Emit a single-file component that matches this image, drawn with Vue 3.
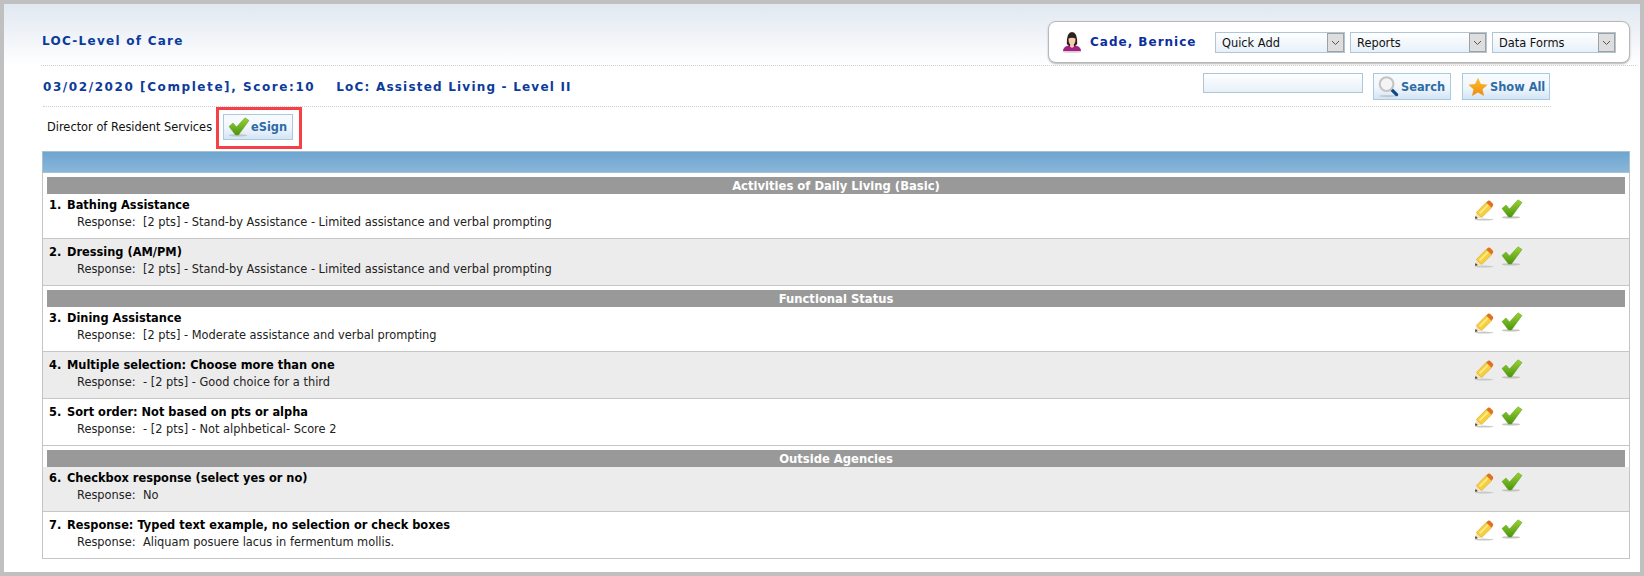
<script setup>
const sections = [
  { title: 'Activities of Daily Living (Basic)', rows: [
    { n: 1, q: 'Bathing Assistance', a: '[2 pts] - Stand-by Assistance - Limited assistance and verbal prompting' },
    { n: 2, q: 'Dressing (AM/PM)', a: '[2 pts] - Stand-by Assistance - Limited assistance and verbal prompting' },
  ]},
  { title: 'Functional Status', rows: [
    { n: 3, q: 'Dining Assistance', a: '[2 pts] - Moderate assistance and verbal prompting' },
    { n: 4, q: 'Multiple selection: Choose more than one', a: '- [2 pts] - Good choice for a third' },
    { n: 5, q: 'Sort order: Not based on pts or alpha', a: '- [2 pts] - Not alphbetical- Score 2' },
  ]},
  { title: 'Outside Agencies', rows: [
    { n: 6, q: 'Checkbox response (select yes or no)', a: 'No' },
    { n: 7, q: 'Response: Typed text example, no selection or check boxes', a: 'Aliquam posuere lacus in fermentum mollis.' },
  ]},
]
const selects = [
  { label: 'Quick Add', w: 130 },
  { label: 'Reports', w: 137 },
  { label: 'Data Forms', w: 124 },
]
</script>

<template>
  <svg class="defs" width="0" height="0" aria-hidden="true">
    <defs>
      <linearGradient id="gGreen" x1="0" y1="0" x2="0" y2="1">
        <stop offset="0" stop-color="#9ad334" />
        <stop offset="1" stop-color="#4a9410" />
      </linearGradient>
      <linearGradient id="gStar" x1="0" y1="0" x2="0" y2="1">
        <stop offset="0" stop-color="#fcc02c" />
        <stop offset="1" stop-color="#ef8a10" />
      </linearGradient>
      <symbol id="check" viewBox="0 0 22 20">
        <ellipse cx="10" cy="18.4" rx="9" ry="1.1" fill="#c4c4c4" />
        <path d="M1 9.5 L5 6 L8.5 10 L17 0.8 L21 3.5 L10.5 18 L7.5 18 Z" fill="url(#gGreen)" stroke="#5b9f1a" stroke-width=".5" />
      </symbol>
      <symbol id="pencil" viewBox="0 0 20 21">
        <ellipse cx="10" cy="19.6" rx="9.5" ry="1" fill="#c8c8c8" />
        <path d="M1 18.8 L2.4 12.4 L7.6 17.6 Z" fill="#f3dfb4" />
        <path d="M1 18.8 L1.6 16 L3.8 18.2 Z" fill="#333" />
        <path d="M2.4 12.4 L12.2 2.4 L17.6 7.8 L7.6 17.6 Z" fill="#f7cf3c" stroke="#dba51f" stroke-width=".6" />
        <path d="M5.6 13.4 L14.2 4.8" stroke="#fdeb8e" stroke-width="1.8" />
        <path d="M12.2 2.4 L14 .8 Q15 .2 16 .8 L19 3.8 Q19.6 5 18.8 6 L17.6 7.8 Z" fill="#e2711f" />
      </symbol>
      <symbol id="lens" viewBox="0 0 22 24">
        <ellipse cx="10" cy="22" rx="9" ry="1.2" fill="#c8c8c8" />
        <path d="M14 15 L19.5 20.5" stroke="#0e4a86" stroke-width="3.4" stroke-linecap="round" />
        <circle cx="9" cy="9.5" r="7.2" fill="#f4f4f4" stroke="#c4c4c4" stroke-width="2.2" />
      </symbol>
      <symbol id="star" viewBox="0 0 22 22">
        <path d="M11 .8 L14.2 7.7 L21.6 8.5 L16 13.4 L17.6 21 L11 17 L4.4 21 L6 13.4 L.4 8.5 L7.8 7.7 Z" fill="url(#gStar)" />
      </symbol>
      <symbol id="person" viewBox="0 0 20 22">
        <ellipse cx="10" cy="20.8" rx="9.5" ry="1" fill="#cfcfcf" />
        <path d="M1 20 Q1 15.5 6.5 14.5 L13.5 14.5 Q19 15.5 19 20 Z" fill="#a81f83" />
        <path d="M4.8 13 Q4.5 1 10 1 Q15.5 1 15.2 13 L13 15 L7 15 Z" fill="#2c211c" />
        <path d="M6.5 7.5 Q10 6 13.5 7.5 Q13.5 12 11.8 13.5 L12 15.5 L10 17 L8 15.5 L8.2 13.5 Q6.5 12 6.5 7.5 Z" fill="#f2cdb0" />
      </symbol>
    </defs>
  </svg>

  <div class="page">
    <header class="head">
      <h1 class="title">LOC-Level of Care</h1>
      <div class="card">
        <svg class="ic-person"><use href="#person" /></svg>
        <span class="name">Cade, Bernice</span>
        <div class="selects">
          <div v-for="s in selects" :key="s.label" class="select" :style="{ width: s.w + 'px' }">
            <span class="select-label">{{ s.label }}</span>
            <span class="arrow">
              <svg width="9" height="6" viewBox="0 0 9 6"><path d="M1 1 L4.5 4.5 L8 1" fill="none" stroke="#555" /></svg>
            </span>
          </div>
        </div>
      </div>
    </header>

    <div class="sub">
      <div class="sub-text">
        <span class="date">03/02/2020 [Complete], Score:10</span>
        <span class="loc">LoC: Assisted Living - Level II</span>
      </div>
      <input class="search" type="text" aria-label="Search" />
      <button class="btn btn-search"><svg class="ic-lens"><use href="#lens" /></svg>Search</button>
      <button class="btn btn-all"><svg class="ic-star"><use href="#star" /></svg>Show All</button>
    </div>

    <div class="sign">
      <span class="role">Director of Resident Services</span>
      <div class="mark">
        <button class="btn btn-esign"><svg class="ic-check-lg"><use href="#check" /></svg>eSign</button>
      </div>
    </div>

    <main class="table">
      <div class="bar"></div>
      <section v-for="sec in sections" :key="sec.title" class="group">
        <h2 class="sec-title">{{ sec.title }}</h2>
        <div v-for="r in sec.rows" :key="r.n" class="row" :class="{ alt: r.n % 2 === 0 || r.n === 6, plain: r.n === 7 }">
          <div class="row-text">
            <div class="q"><span class="num">{{ r.n }}.</span>{{ r.q }}</div>
            <div class="a"><span class="lbl">Response:</span>{{ r.a }}</div>
          </div>
          <div class="actions">
            <svg class="ic-pencil"><use href="#pencil" /></svg>
            <svg class="ic-check"><use href="#check" /></svg>
          </div>
        </div>
      </section>
    </main>
  </div>
</template>

<style>
html, body { margin: 0; padding: 0; background: #fff; }
</style>

<style scoped>
.defs { position: absolute; }
.page {
  box-sizing: border-box;
  width: 1644px;
  height: 576px;
  overflow: hidden;
  border: 4px solid #c0c0c0;
  background: linear-gradient(#e1e8f1 0, #ffffff 62px);
  font-family: "DejaVu Sans", Verdana, sans-serif;
  font-size: 11.4px;
  color: #111;
}
.head {
  box-sizing: border-box;
  height: 62px;
  margin: 0 4px 0 37px;
  display: flex;
  justify-content: space-between;
  border-bottom: 1px dotted #cfcfcf;
}
.title {
  margin: 29px 0 0 1px;
  font-size: 12px;
  line-height: 16px;
  font-weight: bold;
  color: #0c3b9b;
  letter-spacing: 1.27px;
}
.card {
  box-sizing: border-box;
  width: 582px;
  height: 42px;
  margin: 17px 6px 0 0;
  padding: 0 14px 0 13px;
  display: flex;
  align-items: center;
  background: #fff;
  border: 1px solid #b8b8b8;
  border-radius: 8px;
  box-shadow: 0 1px 2px #b5b5b5;
}
.ic-person { width: 20px; height: 22px; flex: none; }
.name {
  margin-left: 8px;
  width: 125px;
  flex: none;
  font-size: 12px;
  font-weight: bold;
  color: #0c2f9f;
  letter-spacing: 1px;
  white-space: nowrap;
}
.selects { display: flex; gap: 5px; margin-top: 1px; }
.select {
  box-sizing: border-box;
  height: 21px;
  padding-left: 6px;
  display: flex;
  align-items: center;
  justify-content: space-between;
  background: linear-gradient(#fff, #e6f0f9);
  border: 1px solid #aec6d6;
  color: #111;
}
.select-label { padding-top: 1px; }
.arrow {
  box-sizing: border-box;
  width: 17px;
  height: 19px;
  display: flex;
  align-items: center;
  justify-content: center;
  background: #dedede;
  border: 1px solid #a0a0a0;
}
.sub {
  box-sizing: border-box;
  height: 41px;
  width: 1508px;
  margin-left: 39px;
  display: flex;
  border-bottom: 1px dotted #cfcfcf;
}
.sub-text {
  width: 1160px;
  flex: none;
  padding-top: 13px;
  font-size: 12px;
  line-height: 16px;
  font-weight: bold;
  color: #0c3b9b;
  white-space: nowrap;
}
.date { letter-spacing: 1.58px; }
.loc { margin-left: 21px; letter-spacing: 1.2px; }
.search {
  box-sizing: border-box;
  width: 160px;
  height: 20px;
  margin: 7px 10px 0 0;
  padding: 0;
  flex: none;
  background: linear-gradient(#fff, #e6f0f9);
  border: 1px solid #aec6d6;
}
.btn {
  box-sizing: border-box;
  margin: 0;
  padding: 0 0 0 4px;
  display: flex;
  align-items: center;
  font-family: inherit;
  font-size: 11.4px;
  font-weight: bold;
  color: #2d6ca6;
  background: linear-gradient(#f8fbfe 0, #f2f7fc 50%, #d3e5f5 100%);
  border: 1px solid #a8cbe2;
  white-space: nowrap;
}
.btn-search { width: 78px; height: 27px; margin-top: 7px; flex: none; }
.btn-all { width: 88px; height: 27px; margin: 7px 0 0 11px; padding-left: 5px; flex: none; }
.ic-lens { width: 21px; height: 23px; margin-right: 2px; flex: none; }
.ic-star { width: 20px; height: 20px; margin-right: 2px; flex: none; }
.sign {
  height: 44px;
  margin-left: 43px;
  display: flex;
  align-items: center;
}
.role { width: 169px; flex: none; white-space: nowrap; color: #111; margin-top: -4px; }
.mark {
  box-sizing: border-box;
  width: 86px;
  height: 42px;
  border: 3px solid #f64045;
  padding: 4px;
  margin-top: -2px;
}
.btn-esign { width: 70px; height: 26px; padding-left: 4px; }
.ic-check-lg { width: 22px; height: 20px; margin-right: 1px; flex: none; }
.table {
  box-sizing: border-box;
  width: 1588px;
  height: 408px;
  margin-left: 38px;
  border: 1px solid #c4c4c4;
  border-top: 0;
  background: #fff;
}
.bar {
  box-sizing: border-box;
  height: 22px;
  margin: 0 -1px;
  background: linear-gradient(#6ea5cf, #8ab6d9);
  border: 1px solid #a9c0cf;
}
.sec-title {
  box-sizing: border-box;
  height: 17px;
  margin: 4px 4px 0;
  padding-top: 1px;
  font-size: 11.6px;
  line-height: 16px;
  font-weight: bold;
  text-align: center;
  color: #fff;
  background: #999;
}
.row {
  box-sizing: border-box;
  height: 47px;
  padding: 5px 0 0 6px;
  display: flex;
  justify-content: space-between;
  background: #fff;
  border-bottom: 1px solid #c6c6c6;
}
.sec-title + .row { height: 45px; padding-top: 3px; }
.row.alt { background: #ececec; }
.row-text { line-height: 17px; }
.q { font-weight: bold; color: #000; white-space: nowrap; }
.num { display: inline-block; width: 18px; }
.a { padding-left: 28px; color: #222; white-space: nowrap; }
.lbl { display: inline-block; width: 66px; }
.actions { display: flex; align-items: flex-start; gap: 7px; width: 155px; margin-top: 2px; }
.ic-pencil { width: 20px; height: 21px; flex: none; margin-top: 1px; }
.ic-check { width: 22px; height: 20px; flex: none; }
</style>
